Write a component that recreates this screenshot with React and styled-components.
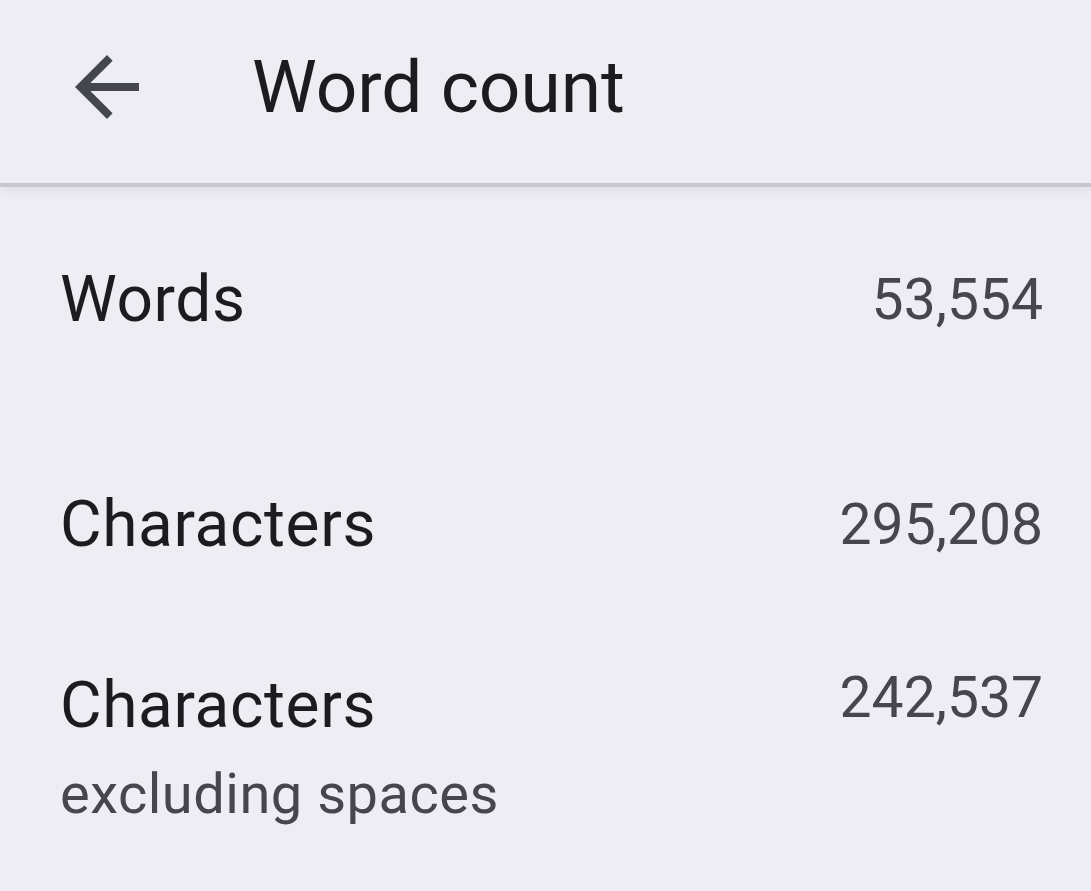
import styled, { createGlobalStyle } from "styled-components";

const Global = createGlobalStyle`
  html, body {
    margin: 0;
    padding: 0;
    background: #eeedf3;
  }
  body {
    font-family: Roboto, "Noto Sans", sans-serif;
  }
`;

const Page = styled.div`
  min-height: 100vh;
  background: #eeedf3;
  overflow: hidden;
`;

const Header = styled.header`
  box-sizing: border-box;
  height: 187px;
  display: flex;
  align-items: center;
  gap: 97px;
  padding: 0 0 10px 59px;
  background: #eeedf3;
  border-bottom: 4px solid #c7c6d0;
  box-shadow: 0 4px 10px rgba(40, 40, 70, 0.07);
  position: relative;
`;

const BackButton = styled.button`
  width: 96px;
  height: 96px;
  padding: 0;
  border: none;
  background: transparent;
  display: flex;
  cursor: pointer;
  svg {
    width: 96px;
    height: 96px;
  }
`;

const Title = styled.h1`
  margin: 0;
  font-size: 73px;
  line-height: 84px;
  font-weight: 400;
  color: #1b1b20;
`;

const List = styled.main`
  padding: 75px 48px 0 60px;
  display: flex;
  flex-direction: column;
`;

const Row = styled.div`
  display: flex;
  justify-content: space-between;
  align-items: ${(p) => (p.$top ? "flex-start" : "center")};
  margin-top: ${(p) => p.$space || 0}px;
`;

const Label = styled.div`
  display: flex;
  flex-direction: column;
`;

const Name = styled.span`
  font-size: 64px;
  line-height: 76px;
  letter-spacing: 0.6px;
  color: #1b1b20;
`;

const Note = styled.span`
  margin-top: 17px;
  font-size: 56px;
  line-height: 66px;
  letter-spacing: 0.5px;
  color: #46464f;
`;

const Value = styled.span`
  font-size: 57px;
  line-height: 60px;
  color: #46464f;
`;

const stats = [
  { name: "Words", value: "53,554", space: 0 },
  { name: "Characters", value: "295,208", space: 149 },
  { name: "Characters", note: "excluding spaces", value: "242,537", space: 105 },
];

export default function App() {
  return (
    <Page>
      <Global />
      <Header>
        <BackButton aria-label="Back">
          <svg viewBox="0 0 24 24" fill="#44464e">
            <path d="M20 11H7.83l5.59-5.59L12 4l-8 8 8 8 1.41-1.41L7.83 13H20v-2z" />
          </svg>
        </BackButton>
        <Title>Word count</Title>
      </Header>
      <List>
        {stats.map((s, i) => (
          <Row key={i} $space={s.space} $top={!!s.note}>
            <Label>
              <Name>{s.name}</Name>
              {s.note && <Note>{s.note}</Note>}
            </Label>
            <Value>{s.value}</Value>
          </Row>
        ))}
      </List>
    </Page>
  );
}
